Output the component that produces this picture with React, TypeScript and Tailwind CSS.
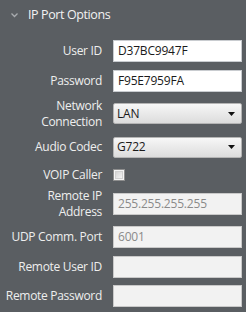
import React from 'react';

const font = { fontFamily: '"Open Sans", "Noto Sans", sans-serif' };

function Label({ lines }: { lines: string[] }) {
    return (
        <div className="w-[102px] shrink-0 text-right text-[12px] leading-[16px] tracking-[-0.3px] text-[#eeeeee]">
            {lines.map((l) => (
                <div key={l}>{l}</div>
            ))}
        </div>
    );
}

function TextBox({ value, disabled }: { value?: string; disabled?: boolean }) {
    return (
        <div
            className={
                disabled
                    ? 'flex h-[22px] w-[129px] items-center border border-[#c9c9c9] bg-[#f2f2f2] pl-[4px] text-[12px] tracking-[-0.2px] text-[#8a8a8a]'
                    : 'flex h-[22px] w-[129px] items-center border border-[#c9ccd0] bg-white pl-[4px] text-[12px] tracking-[-0.2px] text-[#1a1a1a]'
            }
        >
            {value}
        </div>
    );
}

function Select({ value }: { value: string }) {
    return (
        <div className="flex h-[21px] w-[129px] items-center justify-between rounded-[2px] border border-[#b4b4b4] bg-gradient-to-b from-[#f7f7f7] to-[#dcdcdc] pl-[3px] pr-[6px] text-[12px] tracking-[-0.2px] text-[#1a1a1a]">
            <span>{value}</span>
            <svg width="7" height="4" viewBox="0 0 7 4">
                <path d="M0 0 H7 L3.5 4 Z" fill="#111" />
            </svg>
        </div>
    );
}

function Row({ h, children }: { h: string; children: React.ReactNode }) {
    return <div className={`flex items-center gap-[11px] ${h}`}>{children}</div>;
}

export default function App() {
    return (
        <div className="h-[312px] w-[246px] overflow-hidden bg-[#5a5e62]" style={font}>
            <div className="flex h-[36px] items-start gap-[10px] pl-[11px] pt-[6px]">
                <svg className="mt-[7px]" width="7" height="5" viewBox="0 0 7 5">
                    <path d="M0.5 0.5 L3.5 3.5 L6.5 0.5" stroke="#a9acaf" strokeWidth="1.3" fill="none" />
                </svg>
                <span className="text-[12.5px] leading-[18px] tracking-[-0.4px] text-[#f2f2f2]">IP Port Options</span>
            </div>
            <Row h="h-[30px]">
                <Label lines={['User ID']} />
                <TextBox value="D37BC9947F" />
            </Row>
            <Row h="h-[30px]">
                <Label lines={['Password']} />
                <TextBox value="F95E7959FA" />
            </Row>
            <Row h="h-[35px]">
                <Label lines={['Network', 'Connection']} />
                <Select value="LAN" />
            </Row>
            <Row h="h-[32px]">
                <Label lines={['Audio Codec']} />
                <Select value="G722" />
            </Row>
            <Row h="h-[24px]">
                <Label lines={['VOIP Caller']} />
                <div className="flex h-[12px] w-[12px] items-center justify-center border border-[#8e8e8e] bg-[#f4f4f4]">
                    <div className="h-[8px] w-[8px] border border-[#d0d0d0] bg-gradient-to-br from-[#d4d4d4] to-[#f4f4f4]" />
                </div>
            </Row>
            <Row h="h-[34px]">
                <Label lines={['Remote IP', 'Address']} />
                <TextBox value="255.255.255.255" disabled />
            </Row>
            <Row h="h-[32px]">
                <Label lines={['UDP Comm. Port']} />
                <TextBox value="6001" disabled />
            </Row>
            <Row h="h-[28px]">
                <Label lines={['Remote User ID']} />
                <TextBox disabled />
            </Row>
            <Row h="h-[30px]">
                <Label lines={['Remote Password']} />
                <TextBox disabled />
            </Row>
        </div>
    );
}
